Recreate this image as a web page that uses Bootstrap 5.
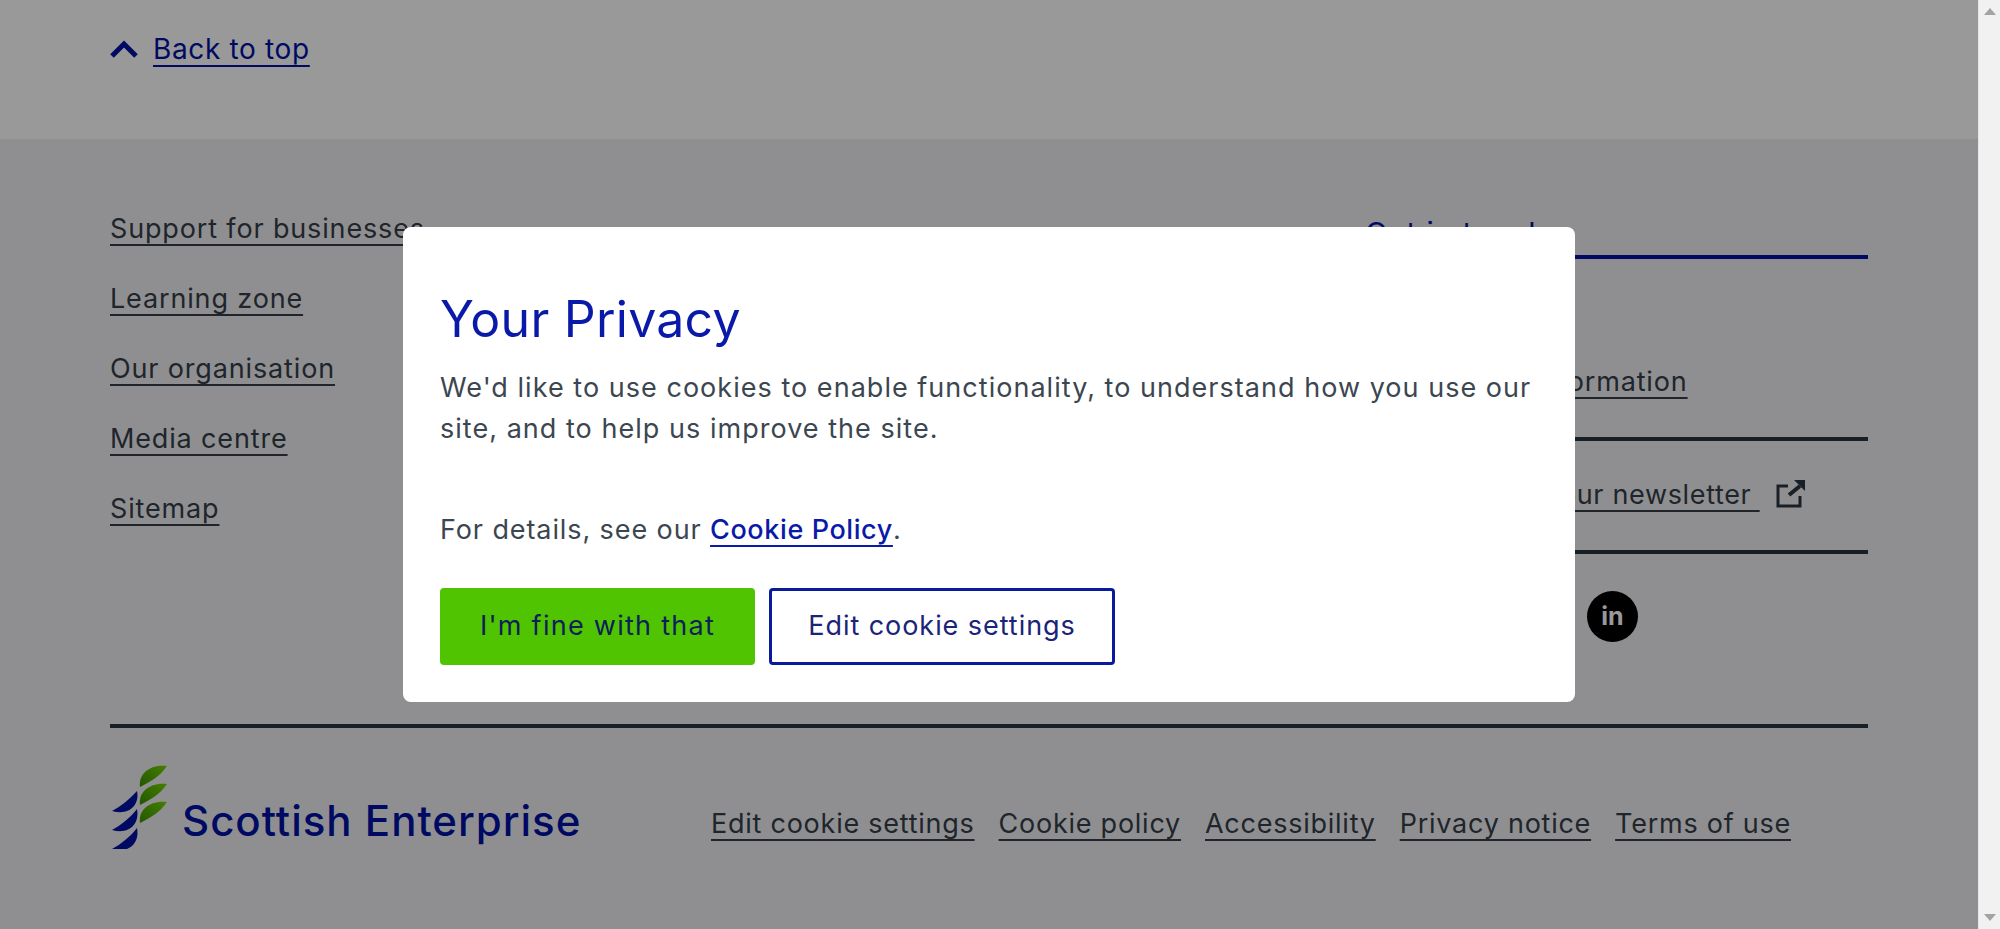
<!DOCTYPE html>
<html lang="en">
<head>
  <meta charset="UTF-8">
  <meta name="viewport" content="width=device-width, initial-scale=1.0">
  <title>Scottish Enterprise</title>
  <link href="https://cdn.jsdelivr.net/npm/bootstrap@5.3.3/dist/css/bootstrap.min.css" rel="stylesheet" crossorigin="anonymous">
  <style>
    html, body { height: 100%; overflow: hidden; }
    body { font-family: Inter, "Liberation Sans", sans-serif; font-size: 27px; letter-spacing: .85px; color: #343e49; }
    a { color: inherit; text-underline-offset: 6px; text-decoration-thickness: 1.5px; }

    .page-shell { height: 929px; }
    .page-main { width: 1978px; }
    .fake-scroll { width: 22px; background: #f1f1f1; border-left: 1px solid #e4e4e4; }
    .scroll-up { width: 0; height: 0; border: 6px solid transparent; border-top: 0; border-bottom: 7px solid #a3a3a3; margin-top: 8px; }
    .scroll-down { width: 0; height: 0; border: 6px solid transparent; border-bottom: 0; border-top: 7px solid #a3a3a3; margin-bottom: 8px; }

    .top-band { height: 139px; background: #fff; padding: 30px 110px 0; }
    .top-link { color: #0011a5; line-height: 38px; font-size: 28px; letter-spacing: .65px; gap: 15px; }
    .foot-area { height: 790px; background: #efeff2; padding: 55px 110px 0; }
    .foot-nav { width: 1255px; }
    .foot-nav a { line-height: 70px; display: inline-block; height: 70px; }
    .foot-side { width: 503px; line-height: 38px; margin-top: -2px; }
    .side-title { color: #0011a5; font-size: 30px; height: 67px; padding-top: 22px; border-bottom: 4px solid #0011a5; }
    .side-row { border-bottom: 4px solid #2b3540; }
    .row-info { height: 182px; padding-top: 104px; }
    .row-news { height: 113px; padding-top: 35px; }
    .news-link { letter-spacing: .65px; }
    .social-row { padding-top: 37px; padding-left: 222px; }
    .social-dot { width: 51px; height: 51px; background: #000; color: #fff; font-size: 25px; font-weight: 700; letter-spacing: 0; line-height: 1; }
    .foot-bottom { margin-top: 82px; border-top: 4px solid #2b3540; padding-top: 37px; }
    .brand-name { color: #0011a5; font-size: 42px; letter-spacing: 1px; font-weight: 500; line-height: 44px; margin-left: 15px; margin-top: 34px; }
    .legal-links { gap: 24px; padding-right: 77px; padding-top: 39px; letter-spacing: .75px; }

    .dim-layer { inset: 0 22px 0 0; background: rgba(0, 0, 0, .4); }
    .privacy-box { width: 1172px; height: 475px; background: #fff; border-radius: 8px; padding: 62px 37px 0; letter-spacing: 1.03px; color: #3c4650; }
    .privacy-title { color: #0a1aa8; font-size: 50px; letter-spacing: .25px; font-weight: 400; line-height: 60px; margin-bottom: 18px; }
    .privacy-text { line-height: 41px; margin-bottom: 60px; }
    .privacy-details { line-height: 41px; margin-bottom: 38px; letter-spacing: .9px; }
    .privacy-details a { color: #0a1aa8; font-weight: 500; letter-spacing: .6px; }
    .btn-fine, .btn-edit { height: 77px; font-size: 27px; border-radius: 4px; display: flex; align-items: center; justify-content: center; }
    .btn-fine { width: 315px; background: #50c400; border: 0; color: #0a1f5c; letter-spacing: 1.27px; }
    .btn-edit { width: 346px; background: #fff; border: 3px solid #0a1a9c; color: #1a2478; letter-spacing: .95px; }
    .btn-row { gap: 14px; }
  </style>
</head>
<body>
  <div class="page-shell d-flex position-relative">
    <div class="page-main">
      <div class="top-band">
        <div class="d-flex align-items-center top-link">
          <svg width="28" height="18" viewBox="0 0 28 18"><path d="M2 16 14 4l12 12" fill="none" stroke="#0011a5" stroke-width="5"/></svg>
          <a href="#">Back to top</a>
        </div>
      </div>

      <footer class="foot-area">
        <div class="d-flex">
          <div class="foot-nav">
            <div><a href="#">Support for businesses</a></div>
            <div><a href="#">Learning zone</a></div>
            <div><a href="#">Our organisation</a></div>
            <div><a href="#">Media centre</a></div>
            <div><a href="#">Sitemap</a></div>
          </div>
          <div class="foot-side">
            <div class="side-title">Get in touch</div>
            <div class="side-row row-info"><a href="#">Find further information</a></div>
            <div class="side-row row-news d-flex align-items-start gap-3">
              <a href="#" class="news-link">Sign up to get our newsletter&nbsp;</a>
              <svg class="mt-1" width="30" height="28" viewBox="0 0 30 28" fill="none" stroke="#2b3540"><path d="M12 6H2v20h22v-10" stroke-width="3"/><path d="M13 15 24 6" stroke-width="4"/><path d="M18 0h11v11z" fill="#2b3540" stroke="none"/></svg>
            </div>
            <div class="social-row d-flex">
              <span class="social-dot rounded-circle d-flex align-items-center justify-content-center">in</span>
            </div>
          </div>
        </div>

        <div class="foot-bottom d-flex justify-content-between">
          <div class="d-flex align-items-start">
            <svg width="57" height="84" viewBox="0 0 57 84">
              <defs>
                <linearGradient id="leafGreen" x1="1" y1="0" x2="0" y2="1">
                  <stop offset="0" stop-color="#74d400"/>
                  <stop offset="1" stop-color="#3a9000"/>
                </linearGradient>
              </defs>
              <g fill="#0011a5">
                <path d="M2 46C11 41 20 34 27 26 30 40 19 51 2 46Z"/>
                <path d="M2 65C11 60 20 53 27 44 30 59 19 70 2 65Z"/>
                <path d="M2 84C11 79 20 72 27 63 30 78 19 89 2 84Z"/>
              </g>
              <g fill="url(#leafGreen)">
                <path d="M30 22C28 8 41-1 57 1 50 11 42 16 30 22Z"/>
                <path d="M30 40C28 26 41 17 57 19 50 29 42 34 30 40Z"/>
                <path d="M30 58C28 44 41 35 57 37 50 47 42 52 30 58Z"/>
              </g>
            </svg>
            <div class="brand-name">Scottish Enterprise</div>
          </div>
          <div class="legal-links d-flex">
            <a href="#">Edit cookie settings</a>
            <a href="#">Cookie policy</a>
            <a href="#">Accessibility</a>
            <a href="#">Privacy notice</a>
            <a href="#">Terms of use</a>
          </div>
        </div>
      </footer>
    </div>

    <div class="fake-scroll d-flex flex-column justify-content-between align-items-center">
      <div class="scroll-up"></div>
      <div class="scroll-down"></div>
    </div>

    <div class="dim-layer position-absolute d-flex align-items-center justify-content-center">
      <div class="privacy-box">
        <h2 class="privacy-title">Your Privacy</h2>
        <p class="privacy-text">We'd like to use cookies to enable functionality, to understand how you use our site, and to help us improve the site.</p>
        <p class="privacy-details">For details, see our <a href="#">Cookie Policy</a>.</p>
        <div class="d-flex btn-row">
          <button class="btn btn-fine" type="button">I'm fine with that</button>
          <button class="btn btn-edit" type="button">Edit cookie settings</button>
        </div>
      </div>
    </div>
  </div>

  <script src="https://cdn.jsdelivr.net/npm/bootstrap@5.3.3/dist/js/bootstrap.bundle.min.js" crossorigin="anonymous"></script>
</body>
</html>
